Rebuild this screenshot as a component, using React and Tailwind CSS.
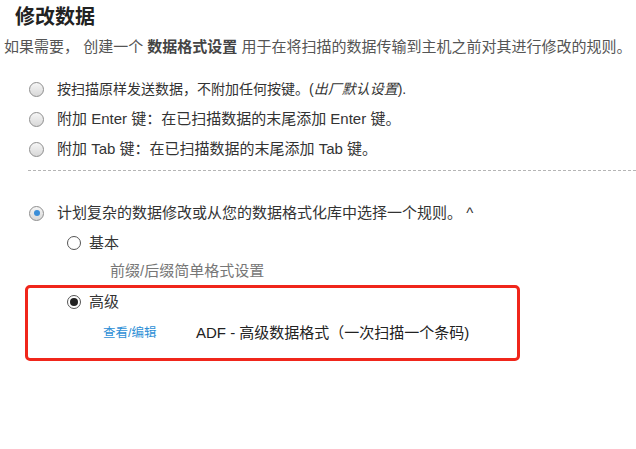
const font = {
  fontFamily: '"Liberation Sans", "Noto Sans CJK SC", sans-serif',
};

const ClassicRadio = ({ checked }) => (
  <span className="w-[15px] h-[15px] rounded-full border border-[#8e8e8e] bg-linear-to-b from-[#f6f6f6] to-[#d8d8d8] flex items-center justify-center shrink-0">
    {checked && <span className="w-[6px] h-[6px] rounded-full bg-[#3b8ed8]" />}
  </span>
);

const PlainRadio = ({ checked }) => (
  <span className="w-[14px] h-[14px] rounded-full border border-[#555] bg-white flex items-center justify-center shrink-0">
    {checked && <span className="w-[8px] h-[8px] rounded-full bg-[#222]" />}
  </span>
);

const App = () => {
  return (
    <div className="w-[636px] h-[449px] bg-white text-[#333] overflow-hidden" style={font}>
      <h1 className="h-[34px] pl-[15px] flex items-center text-[20px] font-bold text-[#222]">
        修改数据
      </h1>
      <p className="h-[27px] pl-[4px] flex items-center text-[15px] text-[#555] whitespace-nowrap">
        如果需要， 创建一个&nbsp;<span className="font-semibold text-[#444]">数据格式设置</span>&nbsp;用于在将扫描的数据传输到主机之前对其进行修改的规则。
      </p>

      <div className="mt-[13px] pl-[29px] text-[15px]">
        <label className="h-[30px] flex items-center gap-[13px]">
          <ClassicRadio />
          <span className="text-[14px]">
            按扫描原样发送数据，不附加任何按键。(<i>出厂默认设置</i>).
          </span>
        </label>
        <label className="h-[30px] flex items-center gap-[13px]">
          <ClassicRadio />
          <span>附加 Enter 键：在已扫描数据的末尾添加 Enter 键。</span>
        </label>
        <label className="h-[30px] flex items-center gap-[13px]">
          <ClassicRadio />
          <span>附加 Tab 键：在已扫描数据的末尾添加 Tab 键。</span>
        </label>
      </div>

      <div className="mt-[6px] ml-[28px] border-t border-dashed border-[#b5b5b5]" />

      <div className="mt-[27px] pl-[29px] text-[15px]">
        <label className="h-[30px] flex items-center gap-[13px]">
          <ClassicRadio checked />
          <span>计划复杂的数据修改或从您的数据格式化库中选择一个规则。 ^</span>
        </label>
        <label className="h-[30px] pl-[38px] flex items-center gap-[8px]">
          <PlainRadio />
          <span>基本</span>
        </label>
        <div className="h-[27px] pl-[81px] flex items-center text-[#777]">
          前缀/后缀简单格式设置
        </div>
      </div>

      <div className="ml-[25px] w-[495px] border-[3px] border-[#f0261b] rounded-[5px] pb-[10px]">
        <label className="h-[28px] pl-[39px] flex items-center gap-[8px] text-[15px]">
          <PlainRadio checked />
          <span>高级</span>
        </label>
        <div className="mt-[2px] h-[30px] flex items-center text-[15px]">
          <a className="ml-[75px] w-[93px] text-[12.5px] text-[#2e8fd6]">查看/编辑</a>
          <span className="text-[#222]">ADF - 高级数据格式（一次扫描一个条码)</span>
        </div>
      </div>
    </div>
  );
};

export default App;
